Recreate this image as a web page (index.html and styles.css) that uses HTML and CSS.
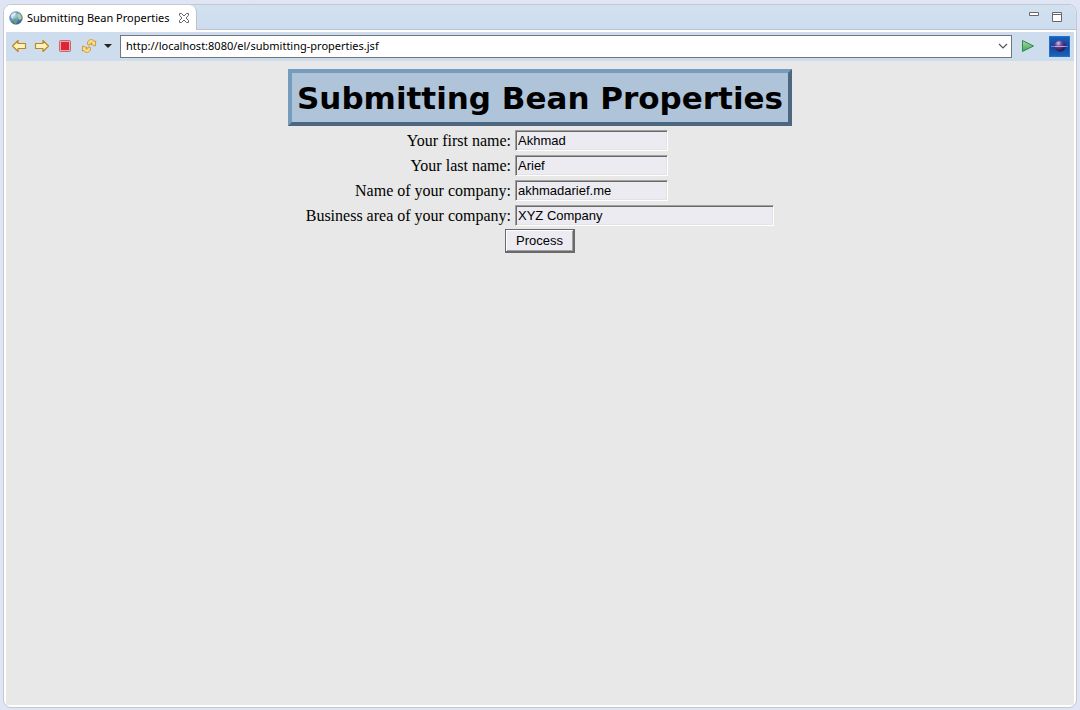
FILE: index.html
```html
<!DOCTYPE html>
<html lang="en">
<head>
<meta charset="utf-8">
<title>Submitting Bean Properties</title>
<link rel="stylesheet" href="styles.css">
</head>
<body>
<div class="window">
  <header class="tabs">
    <div class="tab">
      <svg class="globe" width="14" height="14" viewBox="0 0 14 14" aria-hidden="true">
        <defs><radialGradient id="sea" cx=".35" cy=".3" r=".8"><stop offset="0" stop-color="#b9dced"/><stop offset=".5" stop-color="#5c9dc4"/><stop offset="1" stop-color="#1f4a7c"/></radialGradient></defs>
        <circle cx="7" cy="7" r="6.3" fill="url(#sea)" stroke="#5d7c9c" stroke-width=".7"/>
        <path d="M2 4L5 1.500L7 2L6 4L4 5.500L4.500 7.500L2.500 7Z" fill="#dce9ec"/>
        <path d="M8 3L10.500 2.500L12.500 5L12.500 8L10.500 9L8.500 6Z" fill="#b5cb98"/>
        <path d="M4.500 8L7.500 8.500L8.500 10.500L6.500 13L5 11.500Z" fill="#739e63"/>
      </svg>
      <span class="tab-name">Submitting Bean Properties</span>
      <button class="close" aria-label="Close tab">
        <svg width="12" height="12" viewBox="0 0 12 12" aria-hidden="true"><path d="M1.500 1.500H3.500L6 4L8.500 1.500H10.500V3.500L8 6L10.500 8.500V10.500H8.500L6 8L3.500 10.500H1.500V8.500L4 6L1.500 3.500Z" fill="#fff" stroke="#6b6b6b"/></svg>
      </button>
    </div>
    <div class="controls">
      <button aria-label="Minimize"><svg width="10" height="10" viewBox="0 0 10 10" aria-hidden="true"><path d="M.5 .5H9.500V3.500H.5Z" fill="#fff" stroke="#66666b"/></svg></button>
      <button aria-label="Maximize"><svg width="10" height="10" viewBox="0 0 10 10" aria-hidden="true"><path d="M.5 .5H9.500V9.500H.5ZM.5 2.500H9.500" fill="#fff" stroke="#66666b"/></svg></button>
    </div>
  </header>
  <form class="toolbar">
    <button type="button" aria-label="Back"><svg width="16" height="16" viewBox="0 0 16 16" aria-hidden="true"><path d="M1.500 8L7 2.500V5.500H14.500V10.500H7V13.500Z" fill="#fff2b8" stroke="#bd8625" stroke-linejoin="round" stroke-width="1.200"/></svg></button>
    <button type="button" aria-label="Forward"><svg width="16" height="16" viewBox="0 0 16 16" aria-hidden="true"><path d="M14.500 8L9 2.500V5.500H1.500V10.500H9V13.500Z" fill="#fff2b8" stroke="#bd8625" stroke-linejoin="round" stroke-width="1.200"/></svg></button>
    <button type="button" aria-label="Stop"><svg width="16" height="16" viewBox="0 0 16 16" aria-hidden="true"><rect x="2.500" y="2.500" width="11" height="11" rx="1" fill="#f3a6a9" stroke="#c4676e"/><rect x="4" y="4" width="8" height="8" fill="#dc2637"/></svg></button>
    <div class="refresh">
      <button type="button" aria-label="Refresh"><svg width="16" height="16" viewBox="0 0 16 16" aria-hidden="true"><g fill="#fce08c" stroke="#c99232" stroke-width=".9" stroke-linejoin="round"><path d="M6.500 5C7 2 9.500 .8 12.200 2.200L13 3.500L14.800 3L14.300 8L9.800 6.300L11.300 5.200C10 4.200 9 5 8.700 7L6.800 6.800Z"/><path d="M9.500 11C9 14 6.500 15.200 3.800 13.800L3 12.500L1.200 13L1.700 8L6.200 9.700L4.700 10.800C6 11.800 7 11 7.300 9L9.200 9.200Z"/></g></svg></button>
      <button type="button" class="more" aria-label="Refresh options"><svg width="8" height="4" viewBox="0 0 8 4" aria-hidden="true"><path d="M0 0H8L4 4Z" fill="#222"/></svg></button>
    </div>
    <div class="address">
      <input type="text" aria-label="Address" value="http://localhost:8080/el/submitting-properties.jsf">
      <button type="button" aria-label="Show history"><svg width="10" height="6" viewBox="0 0 10 6" aria-hidden="true"><path d="M1 1L5 5L9 1" fill="none" stroke="#555" stroke-width="1.200"/></svg></button>
    </div>
    <button type="button" class="go" aria-label="Go"><svg width="14" height="14" viewBox="0 0 14 14" aria-hidden="true"><defs><linearGradient id="leaf" x2="0" y2="1"><stop offset="0" stop-color="#a8dba2"/><stop offset="1" stop-color="#3fa556"/></linearGradient></defs><path d="M1.500 1.500L12.500 7L1.500 12.500Z" fill="url(#leaf)" stroke="#2f8a4d" stroke-linejoin="round"/></svg></button>
    <svg class="brand" width="21" height="21" viewBox="0 0 21 21" role="img" aria-label="Eclipse">
      <defs>
        <linearGradient id="sky" x2="0" y2="1"><stop offset="0" stop-color="#1b62bb"/><stop offset=".5" stop-color="#1a3f98"/><stop offset="1" stop-color="#1767bd"/></linearGradient>
        <radialGradient id="moon" cx=".35" cy=".25" r=".8"><stop offset="0" stop-color="#d7bee8"/><stop offset=".4" stop-color="#65458f"/><stop offset="1" stop-color="#1a0e45"/></radialGradient>
      </defs>
      <rect x=".5" y=".5" width="20" height="20" fill="url(#sky)" stroke="#1c75ca"/>
      <circle cx="11" cy="10" r="5.500" fill="url(#moon)"/>
      <path d="M2 10.500H19" stroke="#7e86d6"/><path d="M6 10.500H16" stroke="#b8a6e0"/>
    </svg>
  </form>
  <main class="page">
    <h1 class="title">Submitting Bean Properties</h1>
    <form class="bean">
      <div class="row"><label for="first">Your first name:</label><input id="first" type="text" value="Akhmad"></div>
      <div class="row"><label for="last">Your last name:</label><input id="last" type="text" value="Arief"></div>
      <div class="row"><label for="company">Name of your company:</label><input id="company" type="text" value="akhmadarief.me"></div>
      <div class="row"><label for="area">Business area of your company:</label><input id="area" class="wide" type="text" value="XYZ Company"></div>
      <button class="submit" type="button">Process</button>
    </form>
  </main>
</div>
</body>
</html>
```
FILE: styles.css
```css
* { box-sizing: border-box; }
body {
  margin: 0;
  padding: 4px 3px 2px;
  min-height: 100vh;
  display: flex;
  background: #e0e5f5;
  color: #000;
}
.window {
  flex: 1;
  display: flex;
  flex-direction: column;
  border: 1px solid #c7c8cf;
  border-radius: 8px;
  background: #fff;
  overflow: hidden;
}
.window button { font: inherit; }
.tabs button, .toolbar button {
  display: flex;
  padding: 0;
  border: 0;
  background: none;
}
.tabs {
  display: flex;
  justify-content: space-between;
  height: 25px;
  background: linear-gradient(#d2e1f0, #cddded);
  box-shadow: inset 0 -1px #b9c3d4;
  font: 11px/16px "Noto Sans", "Open Sans", sans-serif;
}
.tab {
  display: flex;
  align-items: center;
  padding: 0 6px 0 5px;
  border-right: 1px solid #b9c3d4;
  border-top-right-radius: 7px;
  background: #fff;
}
.tab-name { margin: 0 8px 0 4px; white-space: nowrap; }
.controls { display: flex; gap: 13px; padding: 7px 14px 0 0; }
.toolbar {
  display: flex;
  align-items: center;
  height: 29px;
  margin: 2px 2px 0;
  padding: 0 4px 1px 5px;
  gap: 7px;
  background: #cedded;
}
.refresh { display: flex; align-items: center; gap: 7px; margin: 0 1px; }
.address {
  flex: 1;
  display: flex;
  align-items: center;
  height: 23px;
  padding: 0 3px 0 5px;
  border: 1px solid #737579;
  background: #fff;
}
.address input {
  flex: 1;
  min-width: 0;
  padding: 0;
  border: 0;
  outline: 0;
  background: none;
  color: #000;
  font: 11px/16px "Noto Sans", "Open Sans", sans-serif;
}
.go { margin: 0 7px 0 2px; }
.page {
  flex: 1;
  display: flex;
  flex-direction: column;
  align-items: center;
  margin: 0 2px 2px;
  padding-top: 8px;
  background: #e8e8e8;
}
.title {
  margin: 0;
  padding: 5px 5px 4px;
  border: 4px solid;
  border-color: #759bbd #4e6781 #4e6781 #759bbd;
  background: #b0c4d9;
  font: bold 31px/40px "DejaVu Sans", Verdana, sans-serif;
  white-space: nowrap;
}
.bean {
  display: flex;
  flex-direction: column;
  padding-top: 2px;
  font: 16px/19px "Liberation Serif", "Times New Roman", serif;
}
.row {
  display: grid;
  grid-template-columns: 206px 260px;
  align-items: center;
  gap: 4px;
  height: 25px;
}
.row label { text-align: right; white-space: nowrap; }
.row input {
  width: 153px;
  height: 21px;
  padding: 0 2px 1px;
  border: 1px solid;
  border-color: #a0a0a0 #fff #fff #a0a0a0;
  box-shadow: inset 1px 1px #696969, inset -1px -1px #e3e3e3;
  outline: 0;
  background: #ebebf1;
  color: #000;
  font: 13px/17px "Liberation Sans", Arial, sans-serif;
}
.row .wide { width: 259px; }
.window .submit {
  align-self: center;
  width: 70px;
  height: 24px;
  margin-top: 1px;
  padding: 0;
  border: 1px solid #696969;
  border-width: 1px 2px 2px 1px;
  background: #ebebf1;
  box-shadow: inset 1px 1px #fff, inset -1px -1px #a0a0a0;
  color: #000;
  font: 13px/17px "Liberation Sans", Arial, sans-serif;
}
```
